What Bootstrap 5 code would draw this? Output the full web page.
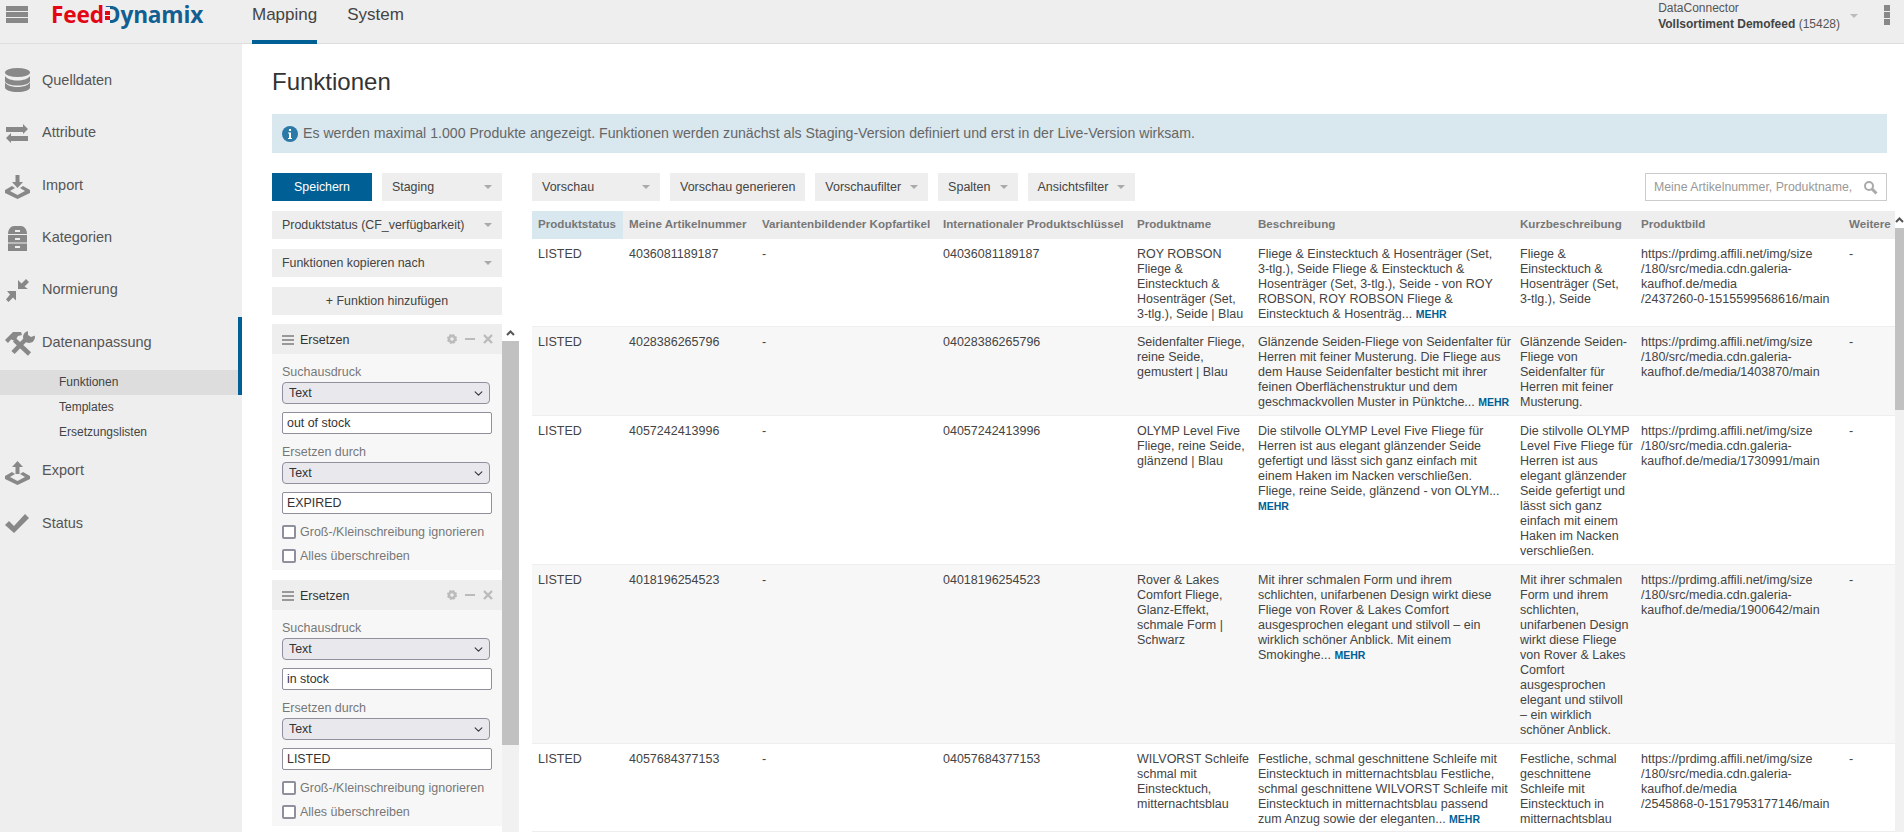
<!DOCTYPE html>
<html lang="de">
<head>
<meta charset="utf-8">
<title>FeedDynamix</title>
<link rel="stylesheet" href="https://cdn.jsdelivr.net/npm/bootstrap@5.3.0/dist/css/bootstrap.min.css">
<style>
html,body{height:100%;overflow:hidden}
body{font-family:"Liberation Sans",Arial,sans-serif;font-size:12.5px;line-height:15px;color:#444;background:#fff}
.fd-top{height:44px;background:#eee;border-bottom:1px solid #ddd;flex-wrap:nowrap;justify-content:flex-start;align-items:flex-start}
.fd-burger{margin:6px 23px 0 6px;width:22px;display:flex;flex-direction:column;gap:1px}
.fd-burger i{display:block;height:5px;background:#888}
.fd-logo{font-family:"Open Sans",sans-serif;font-weight:700;font-size:22.7px;line-height:30px;letter-spacing:-.2px;width:201px;white-space:nowrap}
.fd-logo b{color:#e30613;font-weight:700}
.fd-logo span{color:#135f92}
.fd-logo .fd-d{position:relative;display:inline-block}
.fd-logo .fd-d::before{content:"";position:absolute;left:1.5px;top:7px;width:4.5px;height:17px;background:linear-gradient(#eee 0 25%,#e30613 25% 45%,#eee 45% 55%,#e30613 55% 75%,#eee 75%)}
.fd-nav{gap:30px;flex-wrap:nowrap}
.fd-nav .nav-link{height:44px;padding:5px 0 0;font-size:17px;line-height:20px;color:#444;border-bottom:4px solid transparent}
.fd-nav .nav-link.active{border-bottom-color:#005f95}
.fd-conn{margin-top:1px;margin-left:auto;font-size:12px;line-height:15.5px;color:#555;white-space:nowrap}
.fd-conn strong{color:#444}
.fd-conncaret{margin:14px 26px 0 10px;border-left:4.5px solid transparent;border-right:4.5px solid transparent;border-top:4px solid #bbb;width:0;height:0}
.fd-kebab{margin:5px 14px 0 0;width:6px;display:flex;flex-direction:column;gap:1px}
.fd-kebab i{display:block;height:6px;background:#888}
.fd-shell{height:calc(100vh - 44px);overflow:hidden}
.fd-side{width:242px;flex:none;background:#eee;padding-top:10px}
.fd-item{height:52.5px;padding-left:3px;font-size:14.5px;color:#555}
.fd-item svg{width:32px;height:32px;flex:none;margin-right:7px;fill:#888}
.fd-item.fd-cur{height:53px;padding-bottom:1px;margin-top:2px;box-shadow:inset -4px 0 0 #005f95}
.fd-item.fd-after{height:50.5px}
.fd-sub{height:25px;padding-left:59px;line-height:25px;font-size:12px;color:#444}
.fd-sub.fd-on{background:#ddd;box-shadow:inset -4px 0 0 #005f95}
.fd-main{padding:23px 17px 0 30px;overflow:hidden;min-width:0}
.fd-title{font-size:24px;line-height:29px;font-weight:400;color:#333;margin:0 0 18px}
.fd-info{height:39px;margin:0 0 20px;padding:0 10px;background:#d9e7ee;border:0;border-radius:0;color:#666;font-size:14.13px;gap:5px;flex:none}
.fd-work{min-height:0}
.fd-left{width:247px;flex:none;margin-right:13px}
.fd-btn{height:28px;padding:0 10px;background:#eee;border:0;border-radius:0;font-size:12.4px;line-height:28px;color:#444;white-space:nowrap;display:flex;align-items:center;justify-content:space-between}
.fd-btn.dropdown-toggle::after{margin-left:8px;border-top:4px solid #aaa;border-left:4.5px solid transparent;border-right:4.5px solid transparent;border-bottom:0}
.fd-save{background:#005f95;color:#fff;width:100px;justify-content:center}
.fd-staging{width:120px}
.fd-full{width:230px}
.fd-add{justify-content:center}
.fd-stack{width:230px;gap:10px;flex:none}
.fd-pair{gap:10px}
.fd-list{margin-top:9px;min-height:0;overflow:hidden}
.fd-panels{width:230px;flex:none}
.fd-panel{background:#f7f7f7;margin-bottom:10px;height:246px}
.fd-phead{height:30px;background:#eee;padding:2px 9px 0 10px;color:#333;font-size:12.5px}
.fd-phead svg.fd-ph{width:12px;height:10px;margin-right:6px;fill:#999}
.fd-ptools{margin-left:auto;gap:8px;display:flex;align-items:center;margin-top:-3px}
.fd-ptools svg{width:10px;height:12px;fill:#bbb;stroke:#bbb}
.fd-pbody{padding:11px 10px 0}
.fd-lab{color:#777;margin-bottom:2px}
.fd-sel.form-select{height:22px;width:208px;padding:0 20px 0 6px;font-size:12.4px;line-height:18px;color:#333;background-color:#e9e9ed;border:1px solid #8f8f9d;border-radius:4px;background-position:right 5px center;background-size:11px 9px;margin-bottom:8px;box-shadow:none}
.fd-inp.form-control{height:22px;width:210px;min-height:0;padding:0 4px;font-size:12.4px;line-height:18px;color:#333;border:1px solid #8f8f9d;border-radius:2px;margin-bottom:11px}
.fd-chk{height:16px;gap:4px;color:#777;margin-bottom:8px;margin-top:-1px}
.fd-chk+.fd-chk{margin-top:0}
.fd-chk span{padding-top:1px}
.fd-chk .form-check-input{width:14px;height:14px;margin:0;border:2px solid #8f8f9d;border-radius:2px;background-color:#fff;flex:none}
.fd-fakebar{width:17px;flex:none;background:#f1f1f1;display:flex;flex-direction:column}
.fd-arrow{height:17px;background:#fff;display:flex;align-items:center;justify-content:center;flex:none}
.fd-arrow svg{width:9px;height:6px;fill:none;stroke:#555;stroke-width:2}
.fd-thumb{height:404px;background:#c1c1c1;flex:none}
.fd-right{min-width:0;margin-right:-17px}
.fd-tools{gap:10px;margin-right:17px;margin-bottom:10px;flex:none}
.fd-tools .fd-btn{font-size:12.5px}
.fd-tools .fd-btn.dropdown-toggle::after{margin-left:9px}
.fd-vor{width:128px}
.fd-search{margin-left:auto;width:242px;height:28px;border:1px solid #ccc;padding:0 8px;background:#fff}
.fd-search input{border:0;outline:0;padding:0;font-size:12.3px;color:#555;width:200px;background:transparent}
.fd-search input::placeholder{color:#999;opacity:1}
.fd-search svg{width:15px;height:15px;margin-left:auto;fill:none;stroke:#aaa}
.fd-tablewrap{min-height:0;overflow:hidden}
.fd-table{table-layout:fixed;width:1363px;margin:0;flex:none;font-size:12.5px;line-height:15px;color:#444;border-collapse:collapse}
.fd-table>:not(caption)>*>*{padding:8px 6px 4px;border-bottom:1px solid #eee;background:transparent;box-shadow:none;color:#444;white-space:nowrap}
.fd-table thead th{height:28px;padding:0 6px 3px;background:#eee;color:#777;font-size:11.6px;font-weight:700;vertical-align:middle;border-bottom:0}
.fd-table thead th.fd-sorted{background:#d9e7ee}
.fd-table tbody tr:nth-child(even) td{background:#f7f7f7}
.fd-c1{width:91px}.fd-c2{width:133px}.fd-c3{width:181px}.fd-c4{width:194px}.fd-c5{width:121px}.fd-c6{width:262px}.fd-c7{width:121px}.fd-c8{width:208px}.fd-c9{width:52px}
.fd-more{color:#005f95;font-weight:700;font-size:10.5px;line-height:1;text-decoration:none}
.fd-tbar{width:9px;flex:none;background:#f1f1f1;display:flex;flex-direction:column;overflow:hidden}
.fd-tbar .fd-arrow{background:#fff;justify-content:flex-start}
.fd-tbar .fd-thumb{height:182px}
</style>
</head>
<body>
<nav class="navbar fd-top p-0">
  <div class="fd-burger"><i></i><i></i><i></i></div>
  <div class="fd-logo"><b>Feed</b><span><span class="fd-d">D</span>ynamix</span></div>
  <ul class="nav fd-nav">
    <li class="nav-item"><a class="nav-link active" href="#">Mapping</a></li>
    <li class="nav-item"><a class="nav-link" href="#">System</a></li>
  </ul>
  <div class="fd-conn">DataConnector<br><strong>Vollsortiment Demofeed</strong> (15428)</div>
  <div class="fd-conncaret"></div>
  <div class="fd-kebab"><i></i><i></i><i></i></div>
</nav>
<div class="d-flex fd-shell">
  <aside class="fd-side">
    <div class="fd-item d-flex align-items-center"><svg viewBox="0 0 32 32"><ellipse cx="14.5" cy="8.5" rx="12.5" ry="4.5"/><path d="M2 12c2 3 7 4.500 12.500 4.500S25 15 27 12v5c0 2.500-5.500 4.500-12.500 4.500S2 19.500 2 17z"/><path d="M2 18.500c2 3 7 4.500 12.500 4.500s10.500-1.500 12.500-4.500v5c0 2.500-5.500 4.500-12.500 4.500S2 26 2 23.500z"/></svg>Quelldaten</div>
    <div class="fd-item d-flex align-items-center"><svg viewBox="0 0 32 32"><path d="M3 10h17V7l5 5-5 5v-2H3z"/><path d="M25 19H8v-3l-5 5 5 5v-2h17z"/></svg>Attribute</div>
    <div class="fd-item d-flex align-items-center"><svg viewBox="0 0 32 32"><path d="M12.500 6h4v7H20l-5.500 6L9 13h3.500z"/><path d="M2 21l7-4 3 2-5 3 7.500 4 7.500-4-5-3 3-2 7 4v3l-12.500 6L2 24z"/></svg>Import</div>
    <div class="fd-item d-flex align-items-center"><svg viewBox="0 0 32 32"><path d="M5 12c0-5 3-8 6-8h7c3 0 6 3 6 8z"/><rect x="5" y="13" width="19" height="7.500"/><rect x="5" y="21.500" width="19" height="7.500"/><rect x="12" y="8" width="5" height="2" fill="#eee"/><rect x="12" y="16" width="5" height="2" fill="#eee"/><rect x="12" y="24" width="5" height="2" fill="#eee"/></svg>Kategorien</div>
    <div class="fd-item fd-after d-flex align-items-center"><svg viewBox="0 0 32 32"><polygon points="15,7 18.500,10.500 23,6 26,9 21.500,13.500 25,16 15,16"/><polygon points="13,18 13,27.500 10,24.500 5.500,29 3,26.500 7,21.500 4,18"/></svg>Normierung</div>
    <div class="fd-item fd-cur d-flex align-items-center"><svg viewBox="0 0 32 32"><polygon points="2,13 10,5 18,5 19,8 15,9 12,14 8,12.500 5,16"/><path d="M11.500 13l15 14" stroke="#888" stroke-width="4.500" fill="none"/><path d="M24 11L10 25.500" stroke="#888" stroke-width="4.500" fill="none"/><circle cx="26" cy="10" r="6"/><polygon points="25,3 33,3 33,8 28,10 25,8" fill="#eee"/></svg>Datenanpassung</div>
    <div class="fd-sub fd-on">Funktionen</div>
    <div class="fd-sub">Templates</div>
    <div class="fd-sub">Ersetzungslisten</div>
    <div class="fd-item d-flex align-items-center"><svg viewBox="0 0 32 32"><path d="M14.500 6L20 12h-3.500v7h-4v-7H9z"/><path d="M2 21l7-4 3 2-5 3 7.500 4 7.500-4-5-3 3-2 7 4v3l-12.500 6L2 24z"/></svg>Export</div>
    <div class="fd-item d-flex align-items-center"><svg viewBox="0 0 32 32"><polygon points="2,18 6,14 11,19 22,7 26,11 11,26"/></svg>Status</div>
  </aside>
  <main class="fd-main flex-grow-1 d-flex flex-column">
    <h1 class="fd-title">Funktionen</h1>
    <div class="alert fd-info d-flex align-items-center" role="alert">
      <svg width="16" height="16" viewBox="0 0 16 16"><circle cx="8" cy="8" r="8" fill="#2a79a7"/><rect x="7" y="3" width="2" height="2" fill="#fff"/><path d="M6 6.500h3V12h1v1H6v-1h1V7.500H6z" fill="#fff"/></svg>
      <span>Es werden maximal 1.000 Produkte angezeigt. Funktionen werden zunächst als Staging-Version definiert und erst in der Live-Version wirksam.</span>
    </div>
    <div class="d-flex flex-grow-1 fd-work">
      <section class="fd-left d-flex flex-column">
        <div class="fd-stack d-flex flex-column">
          <div class="d-flex fd-pair">
            <button class="btn fd-btn fd-save">Speichern</button>
            <button class="btn fd-btn fd-staging dropdown-toggle">Staging</button>
          </div>
          <button class="btn fd-btn fd-full dropdown-toggle">Produktstatus (CF_verfügbarkeit)</button>
          <button class="btn fd-btn fd-full dropdown-toggle">Funktionen kopieren nach</button>
          <button class="btn fd-btn fd-full fd-add">+ Funktion hinzufügen</button>
        </div>
        <div class="fd-list d-flex flex-grow-1">
          <div class="fd-panels">
            <div class="fd-panel">
              <div class="fd-phead d-flex align-items-center">
                <svg class="fd-ph" viewBox="0 0 12 10"><rect width="12" height="2"/><rect y="4" width="12" height="2"/><rect y="8" width="12" height="2"/></svg>Ersetzen
                <span class="fd-ptools">
                  <svg viewBox="0 0 10 12"><circle cx="5" cy="6" r="3" fill="none" stroke-width="2.500"/><circle cx="5" cy="6" r="4.200" fill="none" stroke-width="1.600" stroke-dasharray="2 1.300"/></svg>
                  <svg viewBox="0 0 10 12"><rect y="5" width="10" height="2" stroke="none"/></svg>
                  <svg viewBox="0 0 10 12"><path d="M1 2l8 8M9 2l-8 8" stroke-width="2.400" fill="none"/></svg>
                </span>
              </div>
              <div class="fd-pbody">
                <div class="fd-lab">Suchausdruck</div>
                <select class="form-select fd-sel"><option>Text</option></select>
                <input class="form-control fd-inp" value="out of stock">
                <div class="fd-lab">Ersetzen durch</div>
                <select class="form-select fd-sel"><option>Text</option></select>
                <input class="form-control fd-inp" value="EXPIRED">
                <label class="fd-chk d-flex align-items-center"><input class="form-check-input" type="checkbox"><span>Groß-/Kleinschreibung ignorieren</span></label>
                <label class="fd-chk d-flex align-items-center"><input class="form-check-input" type="checkbox"><span>Alles überschreiben</span></label>
              </div>
            </div>
            <div class="fd-panel">
              <div class="fd-phead d-flex align-items-center">
                <svg class="fd-ph" viewBox="0 0 12 10"><rect width="12" height="2"/><rect y="4" width="12" height="2"/><rect y="8" width="12" height="2"/></svg>Ersetzen
                <span class="fd-ptools">
                  <svg viewBox="0 0 10 12"><circle cx="5" cy="6" r="3" fill="none" stroke-width="2.500"/><circle cx="5" cy="6" r="4.200" fill="none" stroke-width="1.600" stroke-dasharray="2 1.300"/></svg>
                  <svg viewBox="0 0 10 12"><rect y="5" width="10" height="2" stroke="none"/></svg>
                  <svg viewBox="0 0 10 12"><path d="M1 2l8 8M9 2l-8 8" stroke-width="2.400" fill="none"/></svg>
                </span>
              </div>
              <div class="fd-pbody">
                <div class="fd-lab">Suchausdruck</div>
                <select class="form-select fd-sel"><option>Text</option></select>
                <input class="form-control fd-inp" value="in stock">
                <div class="fd-lab">Ersetzen durch</div>
                <select class="form-select fd-sel"><option>Text</option></select>
                <input class="form-control fd-inp" value="LISTED">
                <label class="fd-chk d-flex align-items-center"><input class="form-check-input" type="checkbox"><span>Groß-/Kleinschreibung ignorieren</span></label>
                <label class="fd-chk d-flex align-items-center"><input class="form-check-input" type="checkbox"><span>Alles überschreiben</span></label>
              </div>
            </div>
          </div>
          <div class="fd-fakebar">
            <div class="fd-arrow"><svg viewBox="0 0 9 6"><path d="M1 5l3.500-3.500L8 5"/></svg></div>
            <div class="fd-thumb"></div>
          </div>
        </div>
      </section>
      <section class="fd-right flex-grow-1 d-flex flex-column">
        <div class="d-flex fd-tools">
          <button class="btn fd-btn fd-vor dropdown-toggle">Vorschau</button>
          <button class="btn fd-btn">Vorschau generieren</button>
          <button class="btn fd-btn dropdown-toggle">Vorschaufilter</button>
          <button class="btn fd-btn dropdown-toggle">Spalten</button>
          <button class="btn fd-btn dropdown-toggle">Ansichtsfilter</button>
          <div class="fd-search d-flex align-items-center">
            <input type="text" placeholder="Meine Artikelnummer, Produktname,">
            <svg viewBox="0 0 15 15"><circle cx="6" cy="6" r="4" stroke-width="2"/><path d="M9 9l4.500 4.500" stroke-width="3"/></svg>
          </div>
        </div>
        <div class="d-flex flex-grow-1 fd-tablewrap">
          <table class="table fd-table">
            <colgroup><col class="fd-c1"><col class="fd-c2"><col class="fd-c3"><col class="fd-c4"><col class="fd-c5"><col class="fd-c6"><col class="fd-c7"><col class="fd-c8"><col class="fd-c9"></colgroup>
            <thead>
              <tr><th class="fd-sorted">Produktstatus</th><th>Meine Artikelnummer</th><th>Variantenbildender Kopfartikel</th><th>Internationaler Produktschlüssel</th><th>Produktname</th><th>Beschreibung</th><th>Kurzbeschreibung</th><th>Produktbild</th><th>Weitere</th></tr>
            </thead>
            <tbody>
              <tr><td>LISTED</td><td>4036081189187</td><td>-</td><td>04036081189187</td><td>ROY ROBSON<br>Fliege &amp;<br>Einstecktuch &amp;<br>Hosenträger (Set,<br>3-tlg.), Seide | Blau</td><td>Fliege &amp; Einstecktuch &amp; Hosenträger (Set,<br>3-tlg.), Seide Fliege &amp; Einstecktuch &amp;<br>Hosenträger (Set, 3-tlg.), Seide - von ROY<br>ROBSON, ROY ROBSON Fliege &amp;<br>Einstecktuch &amp; Hosenträg... <a class="fd-more" href="#">MEHR</a></td><td>Fliege &amp;<br>Einstecktuch &amp;<br>Hosenträger (Set,<br>3-tlg.), Seide</td><td>https://prdimg.affili.net/img/size<br>/180/src/media.cdn.galeria-<br>kaufhof.de/media<br>/2437260-0-1515599568616/main</td><td>-</td></tr>
              <tr><td>LISTED</td><td>4028386265796</td><td>-</td><td>04028386265796</td><td>Seidenfalter Fliege,<br>reine Seide,<br>gemustert | Blau</td><td>Glänzende Seiden-Fliege von Seidenfalter für<br>Herren mit feiner Musterung. Die Fliege aus<br>dem Hause Seidenfalter besticht mit ihrer<br>feinen Oberflächenstruktur und dem<br>geschmackvollen Muster in Pünktche... <a class="fd-more" href="#">MEHR</a></td><td>Glänzende Seiden-<br>Fliege von<br>Seidenfalter für<br>Herren mit feiner<br>Musterung.</td><td>https://prdimg.affili.net/img/size<br>/180/src/media.cdn.galeria-<br>kaufhof.de/media/1403870/main</td><td>-</td></tr>
              <tr><td>LISTED</td><td>4057242413996</td><td>-</td><td>04057242413996</td><td>OLYMP Level Five<br>Fliege, reine Seide,<br>glänzend | Blau</td><td>Die stilvolle OLYMP Level Five Fliege für<br>Herren ist aus elegant glänzender Seide<br>gefertigt und lässt sich ganz einfach mit<br>einem Haken im Nacken verschließen.<br>Fliege, reine Seide, glänzend - von OLYM...<br><a class="fd-more" href="#">MEHR</a></td><td>Die stilvolle OLYMP<br>Level Five Fliege für<br>Herren ist aus<br>elegant glänzender<br>Seide gefertigt und<br>lässt sich ganz<br>einfach mit einem<br>Haken im Nacken<br>verschließen.</td><td>https://prdimg.affili.net/img/size<br>/180/src/media.cdn.galeria-<br>kaufhof.de/media/1730991/main</td><td>-</td></tr>
              <tr><td>LISTED</td><td>4018196254523</td><td>-</td><td>04018196254523</td><td>Rover &amp; Lakes<br>Comfort Fliege,<br>Glanz-Effekt,<br>schmale Form |<br>Schwarz</td><td>Mit ihrer schmalen Form und ihrem<br>schlichten, unifarbenen Design wirkt diese<br>Fliege von Rover &amp; Lakes Comfort<br>ausgesprochen elegant und stilvoll – ein<br>wirklich schöner Anblick. Mit einem<br>Smokinghe... <a class="fd-more" href="#">MEHR</a></td><td>Mit ihrer schmalen<br>Form und ihrem<br>schlichten,<br>unifarbenen Design<br>wirkt diese Fliege<br>von Rover &amp; Lakes<br>Comfort<br>ausgesprochen<br>elegant und stilvoll<br>– ein wirklich<br>schöner Anblick.</td><td>https://prdimg.affili.net/img/size<br>/180/src/media.cdn.galeria-<br>kaufhof.de/media/1900642/main</td><td>-</td></tr>
              <tr><td>LISTED</td><td>4057684377153</td><td>-</td><td>04057684377153</td><td>WILVORST Schleife<br>schmal mit<br>Einstecktuch,<br>mitternachtsblau</td><td>Festliche, schmal geschnittene Schleife mit<br>Einstecktuch in mitternachtsblau Festliche,<br>schmal geschnittene WILVORST Schleife mit<br>Einstecktuch in mitternachtsblau passend<br>zum Anzug sowie der eleganten... <a class="fd-more" href="#">MEHR</a></td><td>Festliche, schmal<br>geschnittene<br>Schleife mit<br>Einstecktuch in<br>mitternachtsblau</td><td>https://prdimg.affili.net/img/size<br>/180/src/media.cdn.galeria-<br>kaufhof.de/media<br>/2545868-0-1517953177146/main</td><td>-</td></tr>
            </tbody>
          </table>
          <div class="fd-tbar">
            <div class="fd-arrow"><svg viewBox="0 0 9 6"><path d="M1 5l3.500-3.500L8 5"/></svg></div>
            <div class="fd-thumb"></div>
          </div>
        </div>
      </section>
    </div>
  </main>
</div>
<script src="https://cdn.jsdelivr.net/npm/bootstrap@5.3.0/dist/js/bootstrap.bundle.min.js"></script>
</body>
</html>
